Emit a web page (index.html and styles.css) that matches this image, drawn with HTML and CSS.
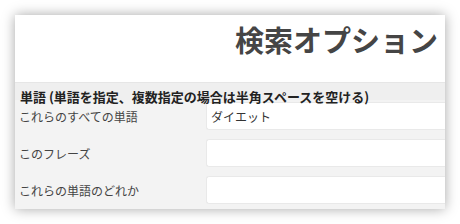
FILE: index.html
```html
<!DOCTYPE html>
<html lang="ja">
<head>
    <meta charset="UTF-8">
    <title>検索オプション</title>
    <link rel="stylesheet" href="styles.css">
</head>
<body>

<div class="panel">
    <h1 class="title">検索オプション</h1>

    <div class="group-title">単語 (単語を指定、複数指定の場合は半角スペースを空ける)</div>

    <div class="rows">
        <label class="row-label" for="all">これらのすべての単語</label>
        <input class="row-input" type="text" id="all" value="ダイエット">

        <label class="row-label" for="phrase">このフレーズ</label>
        <input class="row-input" type="text" id="phrase">

        <label class="row-label" for="any">これらの単語のどれか</label>
        <input class="row-input" type="text" id="any">
    </div>
</div>

</body>
</html>
```

FILE: styles.css
```css
body {
    margin: 0;
    background: #fff;
    font-family: "Noto Sans CJK JP", "Noto Sans", sans-serif;
}
.panel {
    margin: 15px;
    width: 430px;
    background: #f3f3f3;
    box-shadow: 0 0 12px rgba(0, 0, 0, 0.35);
}
.title {
    margin: 0;
    height: 67px;
    padding: 6px 7px 0 0;
    box-sizing: border-box;
    background: #fff;
    text-align: right;
    font-size: 29px;
    line-height: 36px;
    font-weight: bold;
    color: #454545;
}
.group-title {
    position: relative;
    z-index: 1;
    height: 18px;
    padding: 5px 0 0 5px;
    box-sizing: border-box;
    border-top: 1px solid #e6e6e6;
    background: #efefef;
    font-size: 13px;
    line-height: 18px;
    font-weight: bold;
    color: #222;
    white-space: nowrap;
}
.rows {
    display: grid;
    grid-template-columns: 191px 1fr;
    grid-auto-rows: 28px;
    row-gap: 9px;
    padding: 2px 0 5px;
}
.row-label {
    display: flex;
    align-items: center;
    padding-left: 4px;
    font-size: 12px;
    color: #444;
}
.row-input {
    margin: 0;
    padding: 0 4px;
    height: 28px;
    box-sizing: border-box;
    border: 1px solid #e9e9e9;
    border-right: none;
    border-radius: 3px 0 0 3px;
    background: #fff;
    font-family: inherit;
    font-size: 12px;
    color: #333;
    outline: none;
}
```
